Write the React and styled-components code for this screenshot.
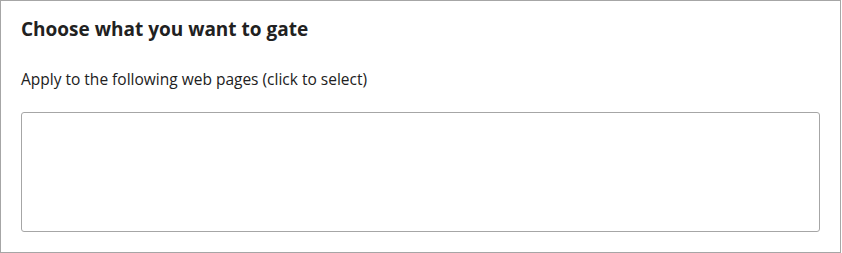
import React from 'react';
import styled, {createGlobalStyle} from 'styled-components';

const GlobalStyle = createGlobalStyle`
    html, body {
        margin: 0;
        padding: 0;
        background: #fff;
    }
`;

const Panel = styled.section`
    box-sizing: border-box;
    width: 841px;
    height: 253px;
    border: 1px solid #a6a6a6;
    padding: 16px 20px 0 20px;
    font-family: "Open Sans", "Noto Sans", sans-serif;
    color: #212121;
`;

const Title = styled.h2`
    margin: 0;
    font-size: 19px;
    font-weight: 700;
    line-height: 24px;
`;

const Label = styled.p`
    margin: 28px 0 0 0;
    font-size: 15.5px;
    line-height: 20px;
`;

const PageList = styled.div`
    box-sizing: border-box;
    margin-top: 23px;
    height: 120px;
    border: 1px solid #a6a6a6;
    border-radius: 3px;
`;

const App = () => (
    <>
        <GlobalStyle/>
        <Panel>
            <Title>Choose what you want to gate</Title>
            <Label>Apply to the following web pages (click to select)</Label>
            <PageList/>
        </Panel>
    </>
);

export default App;
